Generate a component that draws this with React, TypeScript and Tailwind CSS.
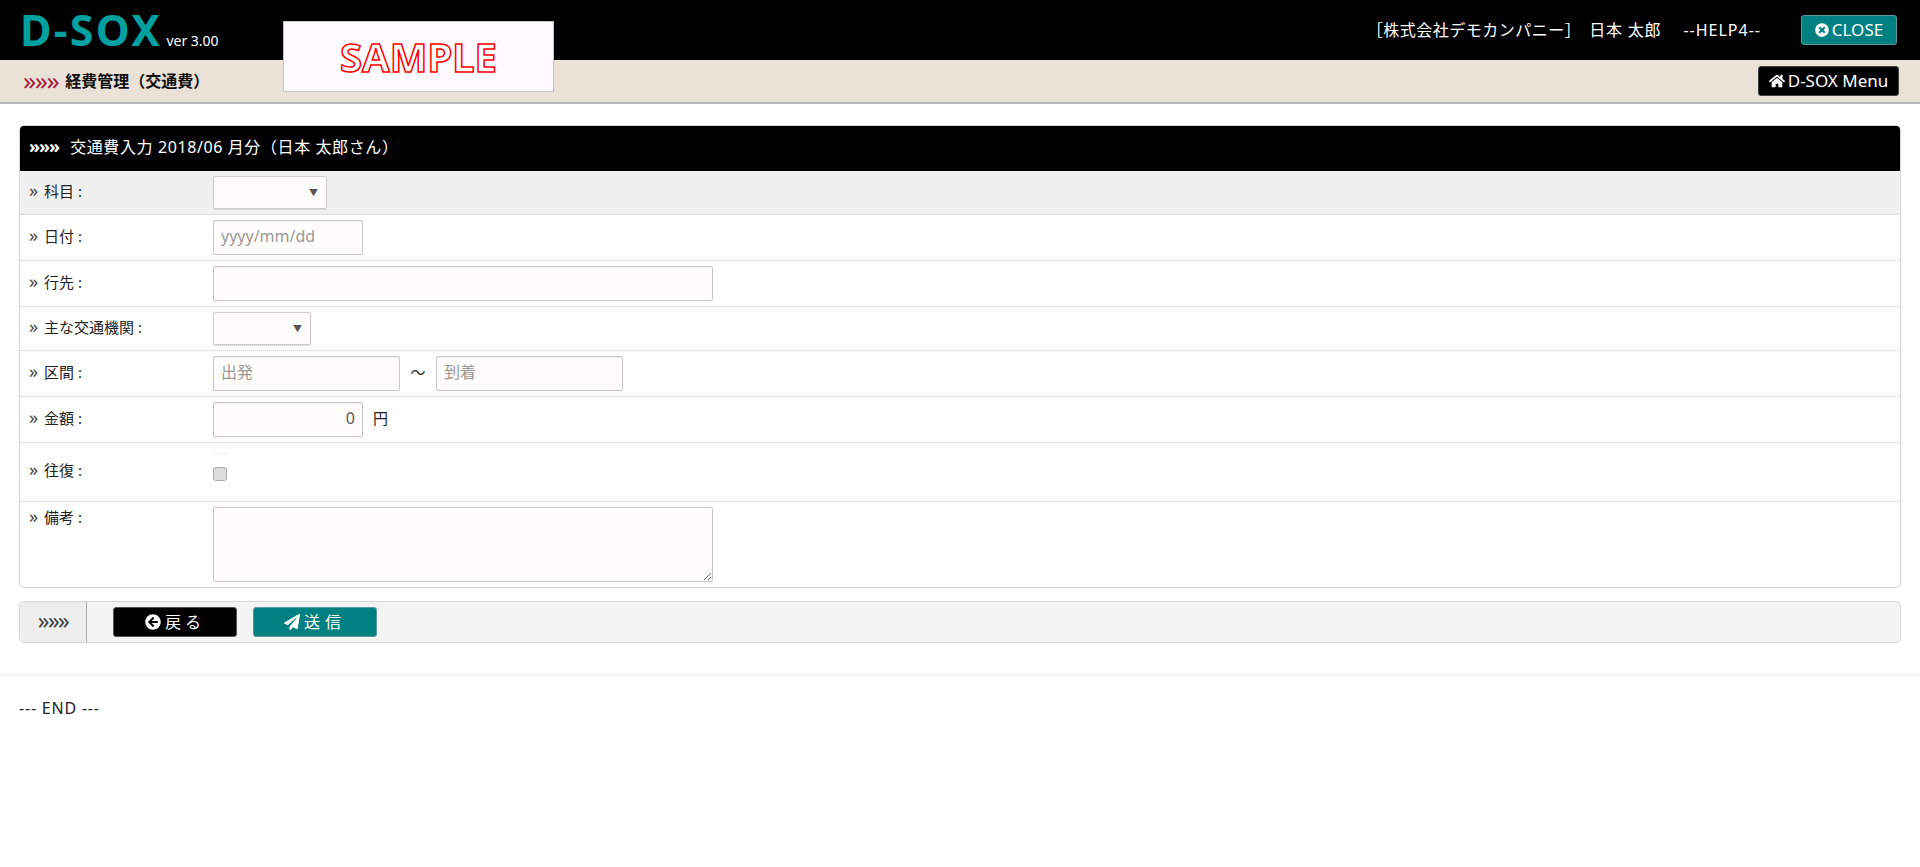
import type { ReactNode } from 'react'
import { FaHome, FaTimesCircle, FaArrowCircleLeft, FaPaperPlane } from 'react-icons/fa'

const inputClass =
  'h-[35px] rounded-[2px] border border-[#c8c8c8] bg-[#fffdfb] px-[7px] pb-[3px] text-[16px] text-[#555] shadow-[inset_0_1px_1px_#eee] outline-none placeholder:text-[#999]'

function Row({
  label,
  height,
  labelTop = 'pt-[10px]',
  bg = '',
  last = false,
  children,
}: {
  label: string
  height: string
  labelTop?: string
  bg?: string
  last?: boolean
  children: ReactNode
}) {
  return (
    <div className={`flex ${height} ${bg} ${last ? '' : 'border-b border-dotted border-[#ccc]'}`}>
      <div className={`flex w-[193px] shrink-0 items-start pl-[9px] text-[15px] leading-[20px] text-[#222] ${labelTop}`}>
        <span className="w-[15px] text-[18px] leading-[19px] text-[#444]">»</span>
        <span>{label} :</span>
      </div>
      <div className="flex flex-1 items-start pt-[5px]">{children}</div>
    </div>
  )
}

function Select({ width }: { width: string }) {
  return (
    <div className={`relative h-[33px] ${width} rounded-[2px] border border-[#ccc] bg-[#fffdfb] shadow-[0_1px_1px_#ddd]`}>
      <select className="h-full w-full appearance-none bg-transparent outline-none" />
      <span className="absolute right-[8px] top-[10px] text-[9px] leading-[12px] text-[#555]">▼</span>
    </div>
  )
}

export default function App() {
  return (
    <div className="min-h-[867px] bg-white font-['Noto_Sans','Noto_Sans_CJK_JP',sans-serif]">
      {/* Header */}
      <header className="flex h-[60px] items-center justify-between bg-black pl-[20px] pr-[23px]">
        <div className="flex items-baseline">
          <span className="text-[43px] font-bold leading-[60px] tracking-[2.3px] text-[#00a0a0]">D-SOX</span>
          <span className="ml-[4px] text-[14px] text-white">ver 3.00</span>
        </div>
        <div className="flex items-center text-[16px] text-white">
          <span className="tracking-[0.5px]">［株式会社デモカンパニー］</span>
          <span className="ml-[8px] tracking-[0.8px]">日本 太郎</span>
          <span className="ml-[22px] tracking-[1px]">--HELP4--</span>
          <button className="ml-[40px] flex h-[30px] w-[96px] items-center justify-center gap-[3px] rounded-[3px] border border-[#5a9a9a] bg-[#008080] text-[17px] text-white">
            <FaTimesCircle className="h-[14px] w-[14px]" /> CLOSE
          </button>
        </div>
      </header>

      {/* Sub nav */}
      <div className="flex h-[44px] items-center justify-between border-b-2 border-[#b5b5b5] bg-[#eae2d6] pl-[23px] pr-[21px]">
        <div className="flex items-center">
          <span className="pb-[3px] text-[26px] leading-[24px] tracking-[-1.5px] text-[#a02040]">»»»</span>
          <span className="ml-[7px] text-[16px] font-bold text-[#111]">経費管理（交通費）</span>
        </div>
        <button className="flex h-[30px] w-[141px] items-center justify-center gap-[3px] rounded-[3px] border border-[#444] bg-black text-[17px] text-white">
          <FaHome className="h-[16px] w-[16px]" /> D-SOX Menu
        </button>
      </div>

      {/* Floating SAMPLE stamp */}
      <div className="absolute left-[283px] top-[21px] flex h-[71px] w-[271px] items-center justify-center border border-[#c4c4c4] bg-[#fffaff]">
        <span className="text-[40px] font-bold leading-none text-white [-webkit-text-stroke:1.5px_#ff0000]">SAMPLE</span>
      </div>

      <main className="px-[19px] pt-[21px]">
        {/* Form panel */}
        <section className="overflow-hidden rounded-[5px] border border-[#d8d8d8]">
          <div className="flex h-[45px] items-center bg-black pb-[3px] pl-[9px] text-[16px] tracking-[0.6px] text-white">
            <span className="pb-[3px] text-[18px] font-bold leading-[22px] tracking-[-1px]">»»»</span>
            <span className="ml-[11px]">交通費入力 2018/06 月分（日本 太郎さん）</span>
          </div>

          <Row label="科目" height="h-[44px]" bg="bg-[#f0f0f0]">
            <Select width="w-[114px]" />
          </Row>
          <Row label="日付" height="h-[46px]" labelTop="pt-[11px]">
            <input className={`${inputClass} w-[150px]`} placeholder="yyyy/mm/dd" />
          </Row>
          <Row label="行先" height="h-[46px]" labelTop="pt-[11px]">
            <input className={`${inputClass} w-[500px]`} />
          </Row>
          <Row label="主な交通機関" height="h-[44px]">
            <Select width="w-[98px]" />
          </Row>
          <Row label="区間" height="h-[46px]" labelTop="pt-[11px]">
            <input className={`${inputClass} w-[187px]`} placeholder="出発" />
            <span className="w-[36px] pt-[5px] text-center text-[15px] text-[#333]">～</span>
            <input className={`${inputClass} w-[187px]`} placeholder="到着" />
          </Row>
          <Row label="金額" height="h-[46px]" labelTop="pt-[11px]">
            <input className={`${inputClass} w-[150px] text-right`} defaultValue="0" />
            <span className="ml-[10px] pt-[5px] text-[15px] text-[#222]">円</span>
          </Row>
          <Row label="往復" height="h-[59px]" labelTop="pt-[17px]">
            <div className="mt-[5px] flex h-[43px] w-[16px] items-center border-t border-[#f2f2f2]">
              <input
                type="checkbox"
                className="mb-[2px] h-[14px] w-[14px] appearance-none rounded-[3px] border border-[#aaa] bg-[#dcdcdc]"
              />
            </div>
          </Row>
          <Row label="備考" height="h-[85px]" labelTop="pt-[5px]" last>
            <textarea className="h-[75px] w-[500px] rounded-[2px] border border-[#c8c8c8] bg-[#fffdfb] outline-none" />
          </Row>
        </section>

        {/* Action bar */}
        <div className="mt-[13px] flex h-[42px] overflow-hidden rounded-[5px] border border-[#d8d8d8] bg-[#f4f4f4]">
          <div className="flex w-[67px] items-center justify-center border-r border-[#aaa] bg-[#eeeeee] pb-[4px] text-[23px] tracking-[-1.5px] text-[#444]">
            »»»
          </div>
          <div className="flex items-center gap-[16px] pl-[26px]">
            <button className="flex h-[30px] w-[124px] items-center justify-center gap-[4px] rounded-[3px] border border-[#555] bg-black text-[16px] tracking-[4px] text-white">
              <FaArrowCircleLeft className="h-[16px] w-[16px]" /> 戻る
            </button>
            <button className="flex h-[30px] w-[124px] items-center justify-center gap-[4px] rounded-[3px] border border-[#5a9a9a] bg-[#008080] text-[16px] tracking-[5px] text-white">
              <FaPaperPlane className="h-[16px] w-[16px]" /> 送信
            </button>
          </div>
        </div>
      </main>

      <hr className="mt-[31px] border-t-2 border-[#f2f2f2]" />
      <div className="pl-[19px] pt-[20px] text-[16px] tracking-[0.8px] text-[#222]">--- END ---</div>
    </div>
  )
}
